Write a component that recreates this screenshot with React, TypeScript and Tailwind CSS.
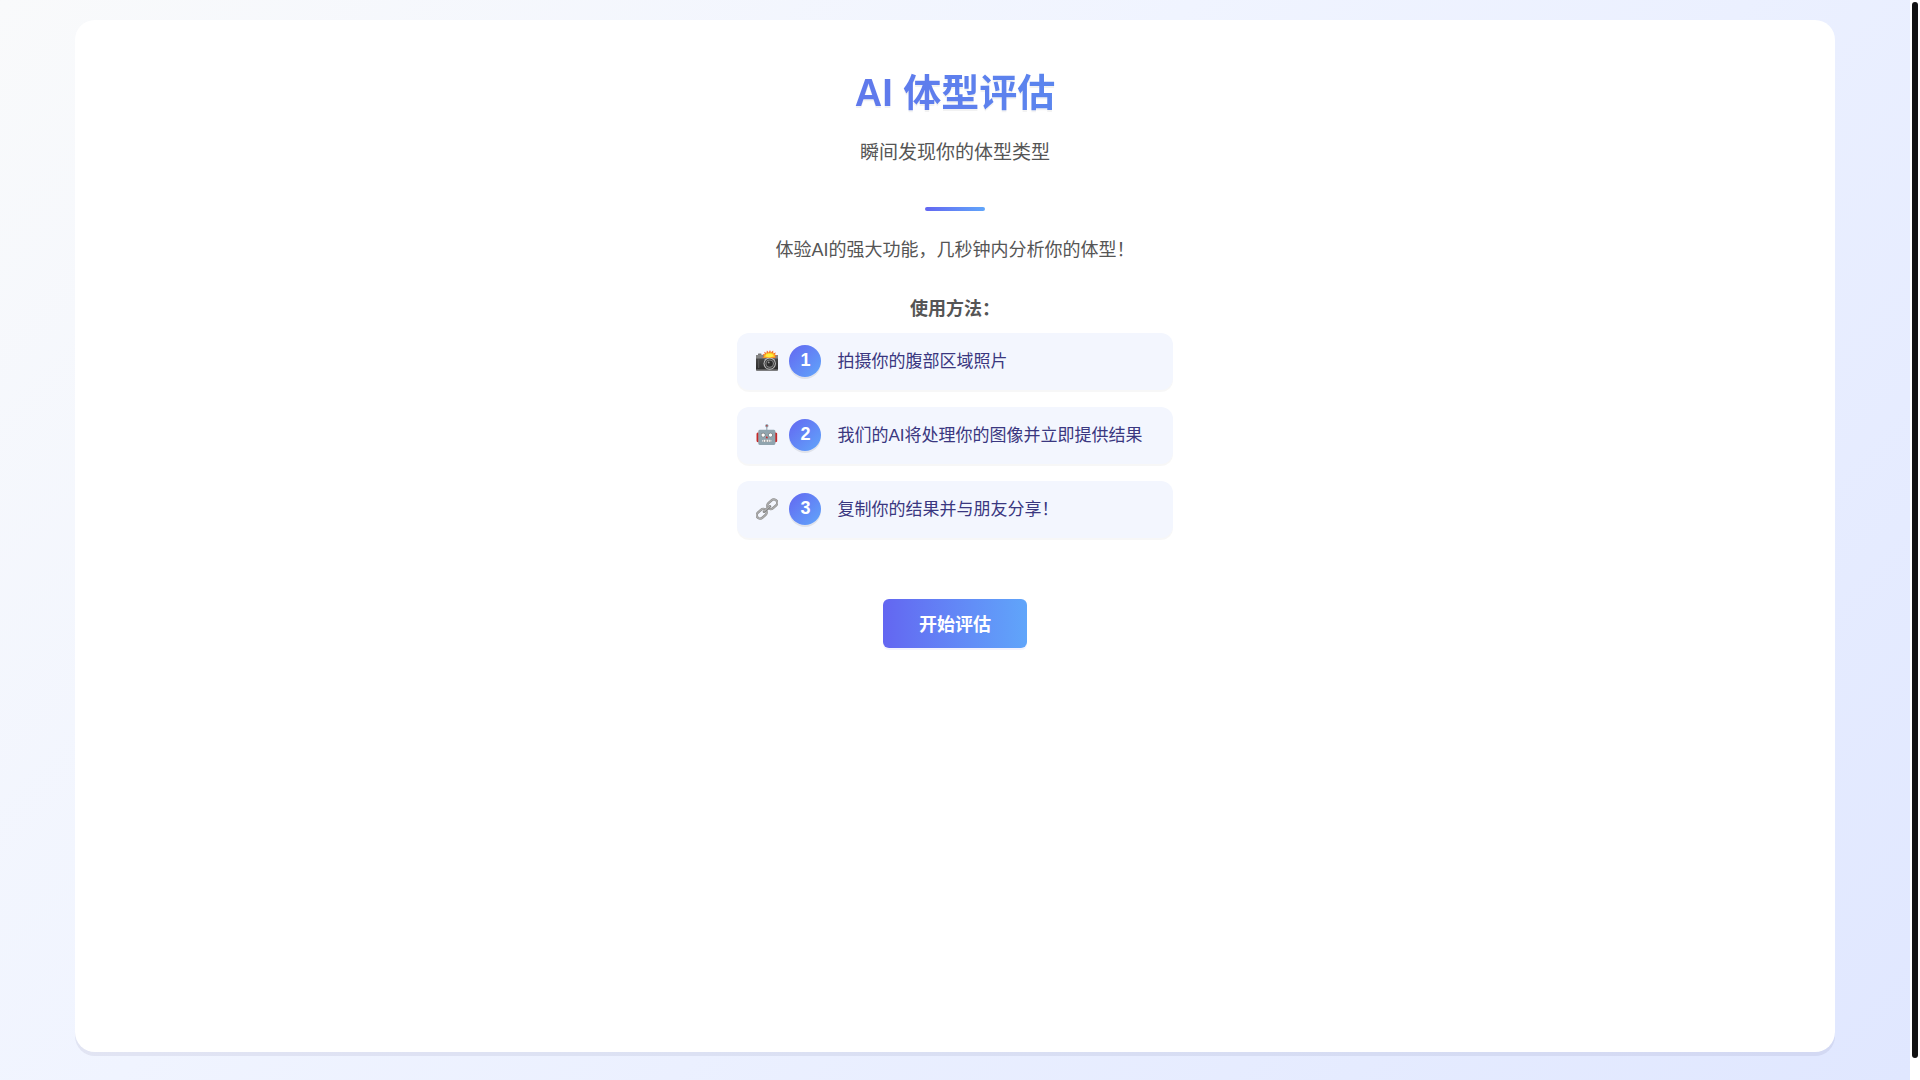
import type { ReactNode } from "react";

function CameraIcon() {
  return (
    <svg viewBox="0 0 22 22" className="size-[22px]" aria-hidden="true">
      <defs>
        <linearGradient id="camera-body" x1="0" y1="0" x2="0" y2="1">
          <stop offset="0" stopColor="#6a6a6a" />
          <stop offset="0.3" stopColor="#444444" />
          <stop offset="1" stopColor="#2a2a2a" />
        </linearGradient>
      </defs>
      <rect x="2" y="3.6" width="3.5" height="2" rx="0.5" fill="#777777" />
      <rect x="0" y="5" width="22" height="15.6" rx="1" fill="url(#camera-body)" />
      <path d="M0 6a1 1 0 0 1 1-1h20a1 1 0 0 1 1 1v2.5H0z" fill="#858585" />
      <rect x="0" y="19.2" width="22" height="1.4" rx="0.5" fill="#6d6d6d" />
      <rect x="2" y="9.5" width="1.2" height="8.5" fill="#555555" />
      <circle cx="13.7" cy="13.6" r="6.2" fill="#bdbdbd" />
      <circle cx="13.7" cy="13.6" r="5.2" fill="#3c3c3c" />
      <circle cx="13.7" cy="13.6" r="4.2" fill="#8b8b8b" />
      <circle cx="13.7" cy="13.6" r="3.2" fill="#2c2c2c" />
      <circle cx="12.7" cy="12.4" r="0.9" fill="#9a9a9a" />
      <path
        d="M6 7.8 8.2 6 6.3 4.2l2.5-.1-.7-2.4 2.3 1.2.5-2.5 1.9 1.8L14 0l1 2.2 2.2-1.6.1 2.6 2.7-.6-1.2 2 2.2 1-2.1 1 1.2 1.4z"
        fill="#f5702d"
      />
      <path d="m7.2 7.6 1.6-1.7-1-1.4 2.2.1-.2-1.9 1.8.9.8-1.7 1.4 1.3 1.3-1.4.8 1.6 1.9-.7-.2 1.8 1.9.2-1.3 1 1 1.5z" fill="#ffc928" />
      <ellipse cx="13.4" cy="5.6" rx="3.6" ry="1.8" fill="#ffee3d" />
    </svg>
  );
}

function LinkIcon() {
  return (
    <svg viewBox="0 0 22 22" className="size-[22px]" fill="none" aria-hidden="true">
      <g transform="rotate(-42 11 11)">
        <rect x="-1.6" y="7.6" width="11" height="6.8" rx="3.4" stroke="#8b8b8b" strokeWidth="2.4" />
        <rect x="12.6" y="7.6" width="11" height="6.8" rx="3.4" stroke="#8b8b8b" strokeWidth="2.4" />
        <rect x="-1.6" y="7.6" width="11" height="6.8" rx="3.4" stroke="#adadad" strokeWidth="1.3" />
        <rect x="12.6" y="7.6" width="11" height="6.8" rx="3.4" stroke="#adadad" strokeWidth="1.3" />
        <path d="M7 11h8" stroke="#858585" strokeWidth="2.6" strokeLinecap="round" />
        <path d="M7.4 10.7h7.2" stroke="#b5b5b5" strokeWidth="1.1" strokeLinecap="round" />
      </g>
    </svg>
  );
}

const steps: { icon: ReactNode; text: string }[] = [
  { icon: <CameraIcon />, text: "拍摄你的腹部区域照片" },
  { icon: "🤖", text: "我们的AI将处理你的图像并立即提供结果" },
  { icon: <LinkIcon />, text: "复制你的结果并与朋友分享！" },
];

function Step({ icon, number, text }: { icon: ReactNode; number: number; text: string }) {
  return (
    <li className="flex items-start rounded-xl bg-[#f3f6fe] pt-3 pr-[30px] pb-[11px] pl-[19px] shadow-[0_2px_0_rgba(0,0,0,0.03)]">
      <span
        className="mr-[11px] flex h-8 w-[22px] items-center justify-center text-[19px] leading-8"
        aria-hidden="true"
      >
        {icon}
      </span>
      <span className="mr-4 size-8 rounded-full bg-linear-135 from-[#6366f1] to-[#60a5fa] text-center text-lg leading-[30px] font-bold text-white shadow-[0_2px_0_rgba(0,0,0,0.08)]">
        {number}
      </span>
      <span className="text-[17px] leading-[34px] text-[#3a3780]">{text}</span>
    </li>
  );
}

export default function App() {
  return (
    <div className="flex h-screen bg-white font-['Liberation_Sans','Noto_Sans_CJK_SC',sans-serif]">
      <div className="flex flex-1 bg-linear-135 from-[#f9fafb] via-[#f0f4ff] via-40% to-[#e0e7ff] px-[75px] pt-5 pb-7">
        <main className="flex flex-1 flex-col items-center rounded-[20px] bg-white pt-12 text-[#555555] shadow-[0_4px_0_rgba(30,30,90,0.07)]">
          <h1 className="bg-linear-to-r from-[#6079ec] to-[#5b85ee] bg-clip-text text-[38px] leading-[50px] font-bold text-transparent drop-shadow-[0_2px_0_rgba(0,0,0,0.05)]">
            AI 体型评估
          </h1>
          <p className="mt-[21px] text-[19px] leading-7">瞬间发现你的体型类型</p>
          <div className="mt-10 h-1 w-15 rounded-sm bg-linear-to-r from-[#6366f1] to-[#60a5fa]" />
          <p className="mt-[25px] text-lg leading-7">体验AI的强大功能，几秒钟内分析你的体型！</p>
          <h2 className="mt-[31px] text-lg leading-7 font-bold">使用方法：</h2>
          <ol className="mt-2.5 flex flex-col gap-[17px]">
            {steps.map((step, index) => (
              <Step key={step.text} icon={step.icon} number={index + 1} text={step.text} />
            ))}
          </ol>
          <button
            type="button"
            className="mt-[61px] rounded-md bg-linear-to-r from-[#6366f1] to-[#60a5fa] px-9 pt-3.5 pb-2.5 text-lg leading-[25px] font-bold text-white shadow-[0_2px_0_rgba(99,102,241,0.08)]"
          >
            开始评估
          </button>
        </main>
      </div>
      <div className="flex w-2.5 flex-col px-0.5 pt-0.5 pb-[22px]" aria-hidden="true">
        <div className="flex-1 rounded-full bg-[#111111]" />
      </div>
    </div>
  );
}
